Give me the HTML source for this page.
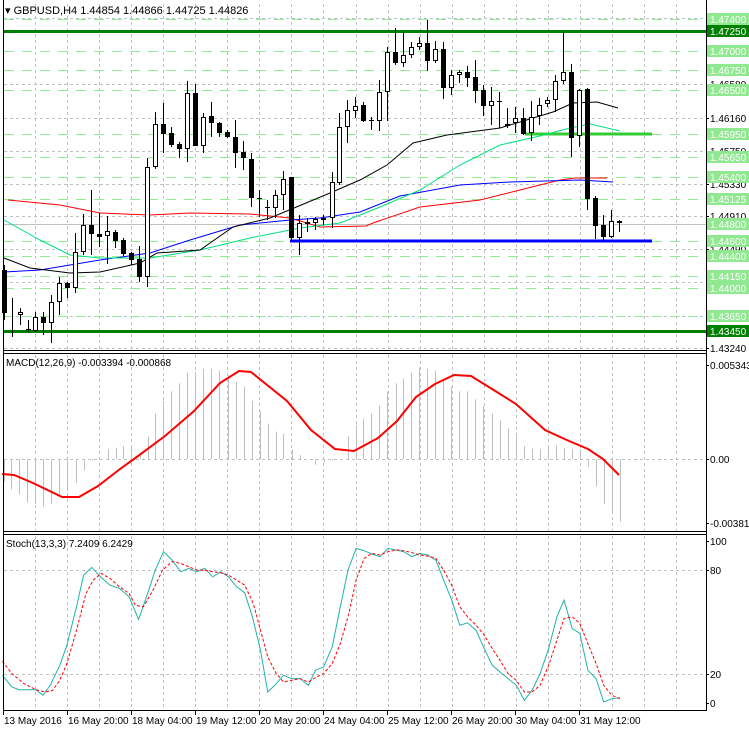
<!DOCTYPE html>
<html><head><meta charset="utf-8"><style>
html,body{margin:0;padding:0;background:#fff;}
svg{display:block;font-family:"Liberation Sans",sans-serif;}
</style></head><body>
<svg id="s" width="749" height="731" viewBox="0 0 749 731" xmlns="http://www.w3.org/2000/svg">
<rect width="749" height="731" fill="#fff"/>
<g id="grid"></g>
<g id="levels"></g>
<g id="mas"></g>
<g id="candles"></g>
<g id="ind"></g>
<g id="frame" stroke="#000" stroke-width="1" fill="none">
<line x1="3.5" y1="0" x2="3.5" y2="711"/>
<line x1="706.5" y1="0" x2="706.5" y2="711"/>
<line x1="3" y1="350.5" x2="707" y2="350.5"/>
<line x1="3" y1="353.5" x2="707" y2="353.5"/>
<line x1="3" y1="531.5" x2="707" y2="531.5"/>
<line x1="3" y1="534.5" x2="707" y2="534.5"/>
<line x1="3" y1="710.5" x2="707" y2="710.5"/>
</g>
<g id="axis" font-size="10"></g>
<text x="5" y="14" font-size="11" fill="#000">▾ GBPUSD,H4  1.44854 1.44866 1.44725 1.44826</text>
<text x="6" y="366" font-size="10" fill="#000">MACD(12,26,9) -0.003394 -0.000868</text>
<text x="6" y="547" font-size="10" fill="#000">Stoch(13,3,3) 7.2409 6.2429</text>
</svg>
<script>
var NS="http://www.w3.org/2000/svg";
function el(p,t,a,txt){var e=document.createElementNS(NS,t);for(var k in a)e.setAttribute(k,a[k]);if(txt!=null)e.textContent=txt;document.getElementById(p).appendChild(e);return e;}
// vertical grid
for(var k=0;k<=20;k++){var x=Math.round(35+32.05*k)+0.5;
 [[4,350],[355,531],[536,710]].forEach(function(r){el("grid","line",{x1:x,y1:r[0],x2:x,y2:r[1],stroke:"#c0c0c0","stroke-dasharray":"3,3"});});}
// horizontal gray grid main
[18,84,118,151,184,216,249,282,316,348].forEach(function(y){el("grid","line",{x1:4,y1:y+.5,x2:706,y2:y+.5,stroke:"#c0c0c0","stroke-dasharray":"3,3"});});
[459].forEach(function(y){el("grid","line",{x1:4,y1:y+.5,x2:706,y2:y+.5,stroke:"#c0c0c0","stroke-dasharray":"3,3"});});
[570,674].forEach(function(y){el("grid","line",{x1:4,y1:y+.5,x2:706,y2:y+.5,stroke:"#c0c0c0","stroke-dasharray":"3,3"});});
// green dashed levels
var gl=[19,51,70,90,157,177,199,256,276,288,316,224,241,134];
gl.forEach(function(y){el("levels","line",{x1:4,y1:y+.5,x2:706,y2:y+.5,stroke:"#90ee90","stroke-dasharray":"10,8"});});
el("levels","line",{x1:4,y1:224.5,x2:706,y2:224.5,stroke:"#c0c0c0"});
el("levels","line",{x1:4,y1:31.5,x2:706,y2:31.5,stroke:"#008000","stroke-width":3});
el("levels","line",{x1:4,y1:331.5,x2:706,y2:331.5,stroke:"#008000","stroke-width":3});
el("levels","line",{x1:525,y1:134,x2:652,y2:134,stroke:"#32cd32","stroke-width":3});
el("levels","line",{x1:290,y1:241,x2:652,y2:241,stroke:"#0000ff","stroke-width":3});
// MAs
function pl(id,pts,col,w,dash){var a={points:pts.map(function(p){return p.join(",");}).join(" "),fill:"none",stroke:col,"stroke-width":w||1};if(dash)a["stroke-dasharray"]=dash;el(id,"polyline",a);}
pl("mas",[[8,200],[60,205],[100,213],[150,215],[190,213],[250,214],[290,218],[320,227],[366,226],[373,223],[420,207],[480,200],[520,190],[560,180],[575,178],[607,178]],"#ff0000");
pl("mas",[[4,272],[40,270],[100,260],[150,253],[190,240],[240,225],[290,220],[320,218],[360,212],[400,196],[460,185],[510,182],[580,180],[613,182]],"#0000ff");
pl("mas",[[4,220],[40,240],[70,255],[100,258],[150,258],[200,250],[250,238],[300,228],[340,223],[380,207],[420,190],[460,165],[500,145],[540,136],[570,128],[590,124],[620,131]],"#00e080");
pl("mas",[[4,258],[30,268],[70,273],[100,272],[140,263],[157,253],[200,250],[233,227],[270,218],[330,193],[360,180],[387,165],[413,143],[447,135],[500,128],[553,112],[573,103],[597,102],[618,108]],"#000");
// candles [x, top, bottom, high, low, black]
var C=[[4,270,313,265,320,1],[12,315,315,298,337,0],[20,312,315,308,325,0],[28,329,330,320,332,1],[35,317,331,312,332,0],[43,317,323,312,335,1],[51,302,323,295,343,0],[59,283,302,277,315,0],[67,283,288,282,298,1],[75,252,288,233,293,0],[83,225,252,214,255,0],[91,225,234,190,255,1],[99,234,237,213,247,1],[107,231,236,216,264,0],[115,232,241,230,248,1],[123,240,254,238,256,1],[131,253,260,252,265,1],[139,259,277,246,282,1],[147,167,277,158,287,0],[155,124,167,112,169,0],[163,124,134,103,153,1],[171,133,145,127,147,1],[179,144,149,142,158,1],[187,93,149,81,162,0],[195,93,146,84,146,1],[203,117,146,113,153,0],[211,116,123,102,137,1],[219,123,133,122,137,1],[227,132,137,130,138,1],[235,137,153,120,168,1],[243,152,158,141,170,1],[251,159,198,153,207,1],[259,198,198,190,217,1],[267,207,208,200,220,1],[275,195,208,190,218,0],[283,179,195,171,210,0],[291,177,238,177,240,1],[299,223,238,215,255,0],[307,222,224,218,232,1],[315,219,223,217,230,0],[323,218,220,215,225,1],[332,182,218,172,228,0],[339,127,183,113,185,0],[347,110,127,100,143,0],[355,106,111,97,118,0],[363,105,121,102,122,1],[371,120,120,117,130,1],[379,92,121,80,131,0],[387,52,92,47,121,0],[395,52,63,28,65,1],[403,55,63,32,67,0],[411,47,55,42,58,0],[419,43,47,37,50,0],[427,43,61,20,71,1],[435,49,61,41,63,0],[443,49,88,42,99,1],[451,75,88,70,95,0],[459,72,75,70,83,0],[467,72,78,66,87,1],[475,77,91,60,103,1],[483,90,106,85,116,1],[491,101,106,87,125,0],[499,101,101,92,128,1],[507,124,126,108,128,1],[515,118,123,107,133,0],[523,118,134,108,135,1],[531,117,133,101,141,0],[539,105,116,98,125,0],[547,100,104,97,107,0],[555,81,100,75,112,0],[563,72,81,32,84,0],[571,72,138,64,157,1],[579,90,136,89,147,0],[587,89,199,88,210,1],[595,198,226,196,239,1],[603,225,237,215,242,1],[611,221,237,210,238,0],[619,221,223,220,232,1]];
C.forEach(function(c){var x=c[0]+.5;
 el("candles","line",{x1:x,y1:c[3],x2:x,y2:c[4],stroke:"#000"});
 var h=Math.max(1,c[2]-c[1]);
 if(c[5])el("candles","rect",{x:c[0]-2,y:c[1],width:5,height:h,fill:"#000"});
 else el("candles","rect",{x:c[0]-1.5,y:c[1]+.5,width:4,height:Math.max(0,h-1),fill:"#fff",stroke:"#000"});
});
// MACD histogram
var HX=[8,24,40,57,74,90,107,123,140,158,175,192,208,225,242,258,275,292,309,325,342,358,375,392,408,425,442,459,477,494,510,527,543,560,577,593,610,627,643,660,677,694,711,727,744,760,777,793,810,828,844,860,877,893,910,927,944,961,978,994,1011,1029,1046,1063,1080,1096,1113,1130,1147,1163,1180,1197,1213,1230,1247,1264,1280,1297];
var HY=[400,425,440,465,470,478,470,445,430,405,365,335,330,300,295,290,290,310,260,190,150,120,95,62,60,50,50,55,70,90,105,150,180,220,245,252,300,318,330,348,340,335,330,258,225,205,190,165,120,95,80,62,45,50,55,85,105,120,120,145,165,190,210,235,255,290,298,300,295,288,295,300,300,355,415,470,500,525];
HX.forEach(function(X,i){var x=Math.round(X*0.478)+.5;var y=459+(HY[i]-330)*0.322;el("ind","line",{x1:x,y1:459,x2:x,y2:y,stroke:"#c0c0c0"});});
var M=[[2,474],[14,475],[33,483],[62,497],[79,497],[98,486],[120,469],[134,459],[165,436],[194,411],[220,383],[239,371],[251,372],[287,401],[311,430],[335,449],[354,451],[378,438],[397,421],[416,397],[435,384],[454,375],[471,376],[492,389],[516,404],[545,430],[569,441],[588,449],[603,459],[619,475]];
pl("ind",M,"#ff0000",2);
// Stoch
function cv(a){return a.map(function(p){return [(p[0]*0.478).toFixed(1),(530+p[1]*0.334).toFixed(1)];});}
var S=[[5,435],[25,470],[40,478],[75,478],[90,495],[105,465],[125,405],[140,345],[160,230],[175,135],[192,112],[210,140],[230,165],[250,175],[270,200],[290,268],[310,185],[325,120],[342,65],[360,90],[378,125],[395,115],[412,125],[428,115],[445,140],[462,125],[478,140],[495,170],[512,188],[528,260],[545,360],[560,485],[575,465],[593,435],[610,445],[628,445],[645,465],[660,420],[677,410],[695,350],[712,230],[728,120],[745,55],[762,62],[778,72],[795,80],[812,55],[828,60],[845,65],[862,80],[878,70],[895,75],[912,90],[928,150],[945,210],[962,285],[978,278],[996,300],[1013,355],[1030,405],[1046,425],[1063,445],[1080,465],[1097,510],[1113,480],[1130,430],[1148,355],[1165,260],[1180,210],[1197,295],[1213,310],[1230,420],[1247,445],[1263,515],[1280,505],[1297,502]];
var R=[[5,393],[25,430],[50,460],[75,478],[95,485],[110,480],[125,450],[140,400],[160,300],[180,190],[195,150],[212,130],[230,145],[250,170],[270,190],[283,225],[300,230],[320,180],[340,120],[360,95],[378,100],[395,110],[412,120],[428,120],[445,125],[462,128],[478,135],[495,150],[512,165],[530,220],[545,300],[560,380],[578,430],[593,455],[610,450],[628,445],[645,455],[662,440],[677,430],[695,400],[712,340],[730,250],[745,150],[762,85],[778,70],[795,75],[812,65],[828,60],[845,62],[862,68],[878,75],[895,78],[912,85],[928,120],[945,165],[962,230],[978,260],[996,285],[1013,315],[1030,355],[1046,390],[1063,430],[1080,450],[1097,485],[1113,485],[1130,465],[1148,405],[1165,330],[1180,265],[1197,260],[1213,280],[1230,340],[1247,400],[1263,465],[1280,495],[1297,505]];
pl("ind",cv(S),"#20b2aa",1);
pl("ind",cv(R),"#ff0000",1,"3,2");
// axis labels
function lab(y,t,bg){ if(bg){el("axis","rect",{x:707,y:y-6,width:42,height:12,fill:bg});el("axis","text",{x:710,y:y+4,fill:"#fff"},t);} else {el("axis","line",{x1:706,y1:y+.5,x2:709,y2:y+.5,stroke:"#000"});el("axis","text",{x:710,y:y+4,fill:"#000"},t);} }
[[84,"1.46580"],[118,"1.46160"],[151,"1.45750"],[184,"1.45330"],[216,"1.44910"],[249,"1.44490"],[282,"1.44070"],[348,"1.43240"]].forEach(function(a){lab(a[0],a[1]);});
var LG="#90e890";
[[19,"1.47400"],[51,"1.47000"],[70,"1.46750"],[90,"1.46500"],[134,"1.45950"],[157,"1.45650"],[177,"1.45400"],[199,"1.45125"],[224,"1.44800"],[241,"1.44600"],[256,"1.44400"],[276,"1.44150"],[288,"1.44000"],[316,"1.43650"]].forEach(function(a){lab(a[0],a[1],LG);});
lab(31,"1.47250","#008000");lab(331,"1.43450","#008000");
lab(365,"0.005343");lab(459,"0.00");lab(523,"-0.00381");
lab(541,"100");lab(570,"80");lab(674,"20");lab(703,"0");
// time labels
[[3,"13 May 2016"],[67,"16 May 20:00"],[131,"18 May 04:00"],[195,"19 May 12:00"],[259,"20 May 20:00"],[323,"24 May 04:00"],[387,"25 May 12:00"],[451,"26 May 20:00"],[515,"30 May 04:00"],[579,"31 May 12:00"]].forEach(function(a){
 el("axis","line",{x1:a[0]+.5,y1:711,x2:a[0]+.5,y2:715,stroke:"#000"});
 el("axis","text",{x:a[0]+1,y:724,fill:"#000"},a[1]);});
</script>
</body></html>
